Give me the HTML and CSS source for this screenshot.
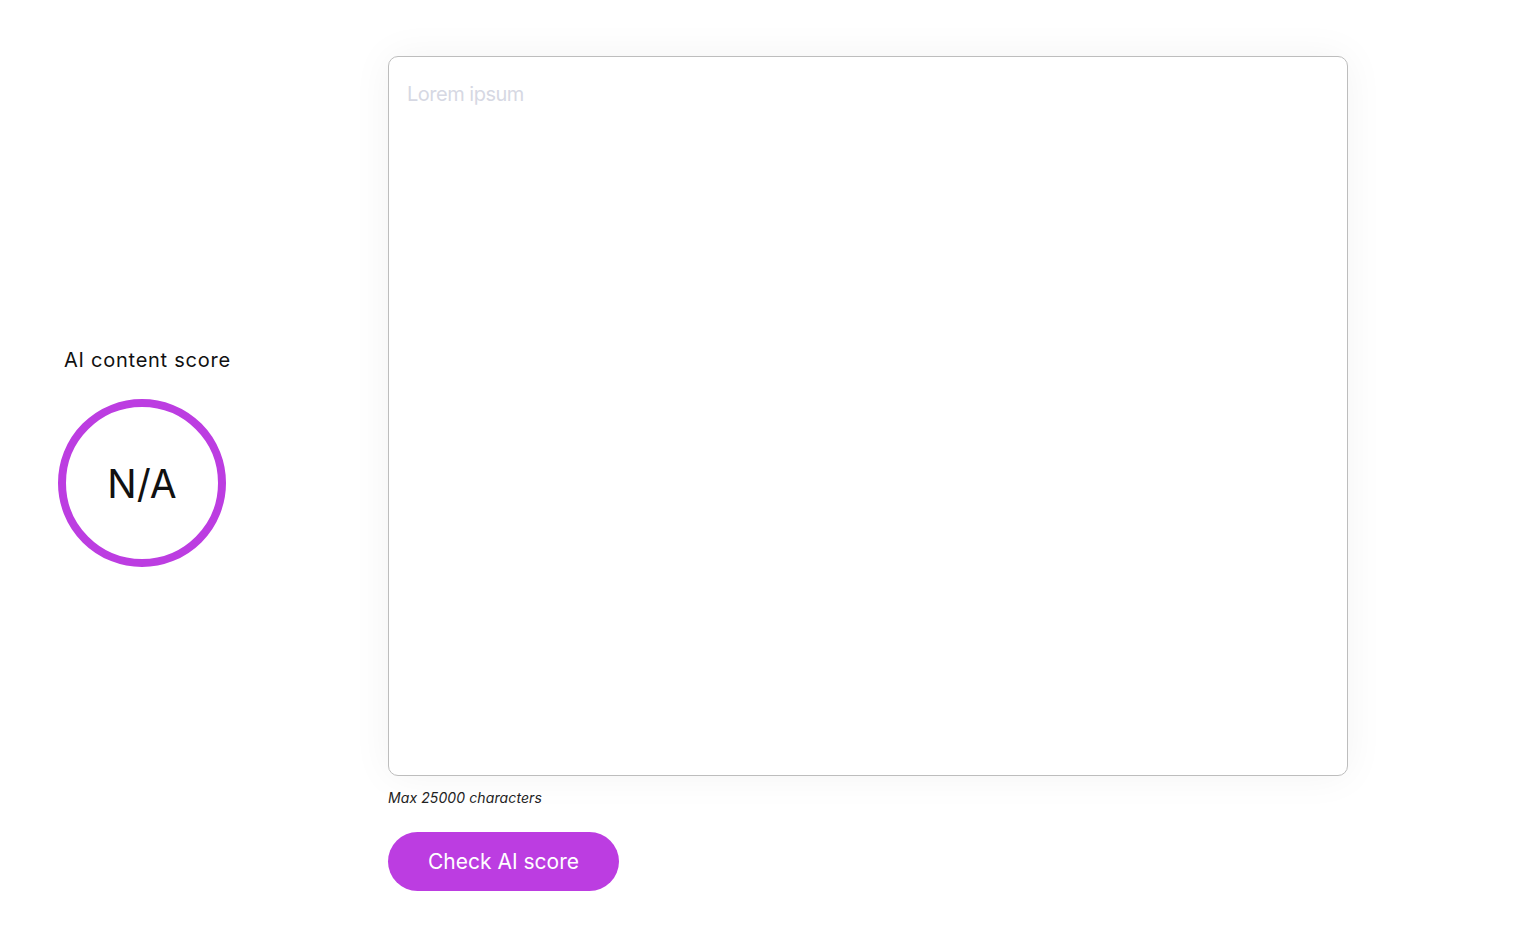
FILE: index.html
```html
<!DOCTYPE html>
<html lang="en">
<head>
<meta charset="utf-8">
<title>AI content score</title>
<link rel="stylesheet" href="styles.css">
</head>
<body>
<main class="page">
  <section class="score-col">
    <div class="score-label">AI content score</div>
    <div class="score-ring"><span class="score-value">N/A</span></div>
  </section>
  <section class="input-col">
    <textarea class="text-input" placeholder="Lorem ipsum"></textarea>
    <div class="hint">Max 25000 characters</div>
    <button class="check-btn" type="button">Check AI score</button>
  </section>
</main>
</body>
</html>
```

FILE: styles.css
```css
* { box-sizing: border-box; }
html, body {
  margin: 0;
  padding: 0;
  background: #ffffff;
  font-family: Inter, "Noto Sans", sans-serif;
  color: #111;
}
.page {
  display: flex;
  align-items: flex-start;
  padding-top: 56px;
}
.score-col {
  width: 388px;
  flex: 0 0 388px;
  padding-left: 58px;
  padding-top: 292px;
}
.score-label {
  margin-left: 6px;
  font-size: 20px;
  line-height: 24px;
  letter-spacing: 0.75px;
  color: #111;
}
.score-ring {
  margin-top: 27px;
  width: 168px;
  height: 168px;
  border: 8px solid #bc3de1;
  border-radius: 50%;
  display: flex;
  align-items: center;
  justify-content: center;
}
.score-value {
  font-size: 39px;
  line-height: 1;
  color: #111;
}
.input-col {
  display: flex;
  flex-direction: column;
  align-items: flex-start;
}
.text-input {
  display: block;
  width: 960px;
  height: 720px;
  border: 1px solid #bdbdbd;
  border-radius: 10px;
  padding: 25px 18px;
  font-family: Inter, "Noto Sans", sans-serif;
  font-size: 20px;
  line-height: normal;
  letter-spacing: -0.5px;
  color: #111;
  resize: none;
  outline: none;
  background: #fff;
  box-shadow: 0 0 40px rgba(0, 0, 0, 0.05);
}
.text-input::placeholder {
  color: #d6d8e3;
}
.hint {
  margin-top: 13px;
  font-size: 14px;
  font-style: italic;
  line-height: 17px;
  letter-spacing: 0.1px;
  color: #222;
}
.check-btn {
  margin-top: 26px;
  height: 59px;
  padding: 0 40px;
  border: none;
  border-radius: 30px;
  background: #bc3de1;
  color: #fff;
  font-family: Inter, "Noto Sans", sans-serif;
  font-size: 21px;
  line-height: 27px;
  cursor: pointer;
}
```
